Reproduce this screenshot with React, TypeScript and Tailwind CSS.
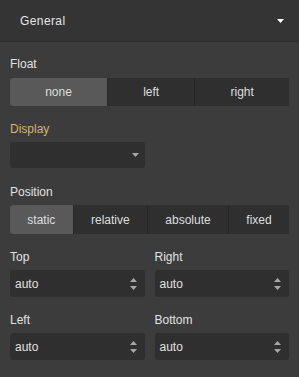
import { useState } from 'react';

function Caret({ className }: { className: string }) {
  return (
    <svg width="7" height="4" viewBox="0 0 7 4" className={className}>
      <path d="M0 0h7L3.5 4z" fill="currentColor" />
    </svg>
  );
}

function Spinner() {
  return (
    <svg width="7" height="12" viewBox="0 0 7 12" className="text-[#a8a8a8]">
      <path d="M3.5 0L7 4H0z" fill="currentColor" />
      <path d="M0 8h7l-3.5 4z" fill="currentColor" />
    </svg>
  );
}

function Segmented({ options, value, onChange, height }: { options: string[]; value: string; onChange: (v: string) => void; height: string }) {
  return (
    <div className={`flex rounded-[3px] overflow-hidden bg-[#2f2f2f] ${height}`}>
      {options.map((opt, i) => (
        <button
          key={opt}
          onClick={() => onChange(opt)}
          className={`flex-auto text-[12px] text-[#dedede] ${i > 0 ? 'border-l border-[#262626]' : ''} ${
            value === opt ? 'bg-[#595959]' : 'bg-[#2f2f2f]'
          }`}
        >
          {opt}
        </button>
      ))}
    </div>
  );
}

function Field({ label, value }: { label: string; value: string }) {
  return (
    <div>
      <div className="text-[12px] leading-[14px] text-[#e2e2e2]">{label}</div>
      <div className="mt-[6px] h-[27px] rounded-[3px] bg-[#2f2f2f] flex items-center justify-between pl-[5px] pr-[8px]">
        <span className="text-[12px] text-[#e0e0e0]">{value}</span>
        <Spinner />
      </div>
    </div>
  );
}

export default function App() {
  const [float, setFloat] = useState('none');
  const [position, setPosition] = useState('static');

  return (
    <div className="w-[299px] h-[377px] bg-[#3c3c3c] font-['Liberation_Sans',Arial,sans-serif] overflow-hidden">
      <div className="h-[42px] bg-[#343434] border-b border-[#2a2a2a] flex items-center justify-between pl-[20px] pr-[15px]">
        <span className="text-[12px] tracking-[0.4px] text-[#e6e6e6]">General</span>
        <Caret className="text-white" />
      </div>

      <div className="px-[10px]">
        <div className="pt-[15px]">
          <div className="text-[12px] leading-[14px] text-[#e2e2e2]">Float</div>
          <div className="mt-[7px]">
            <Segmented options={['none', 'left', 'right']} value={float} onChange={setFloat} height="h-[28px]" />
          </div>
        </div>

        <div className="mt-[16px]">
          <div className="text-[12px] leading-[14px] text-[#d9b26c]">Display</div>
          <div className="mt-[6px] w-[135px] h-[26px] rounded-[3px] bg-[#2f2f2f] flex items-center justify-end pr-[6px]">
            <Caret className="text-[#a8a8a8]" />
          </div>
        </div>

        <div className="mt-[17px]">
          <div className="text-[12px] leading-[14px] text-[#e2e2e2]">Position</div>
          <div className="mt-[6px]">
            <Segmented
              options={['static', 'relative', 'absolute', 'fixed']}
              value={position}
              onChange={setPosition}
              height="h-[29px]"
            />
          </div>
        </div>

        <div className="mt-[16px] grid grid-cols-2 gap-x-[10px] gap-y-[16px]">
          <Field label="Top" value="auto" />
          <Field label="Right" value="auto" />
          <Field label="Left" value="auto" />
          <Field label="Bottom" value="auto" />
        </div>
      </div>
    </div>
  );
}
